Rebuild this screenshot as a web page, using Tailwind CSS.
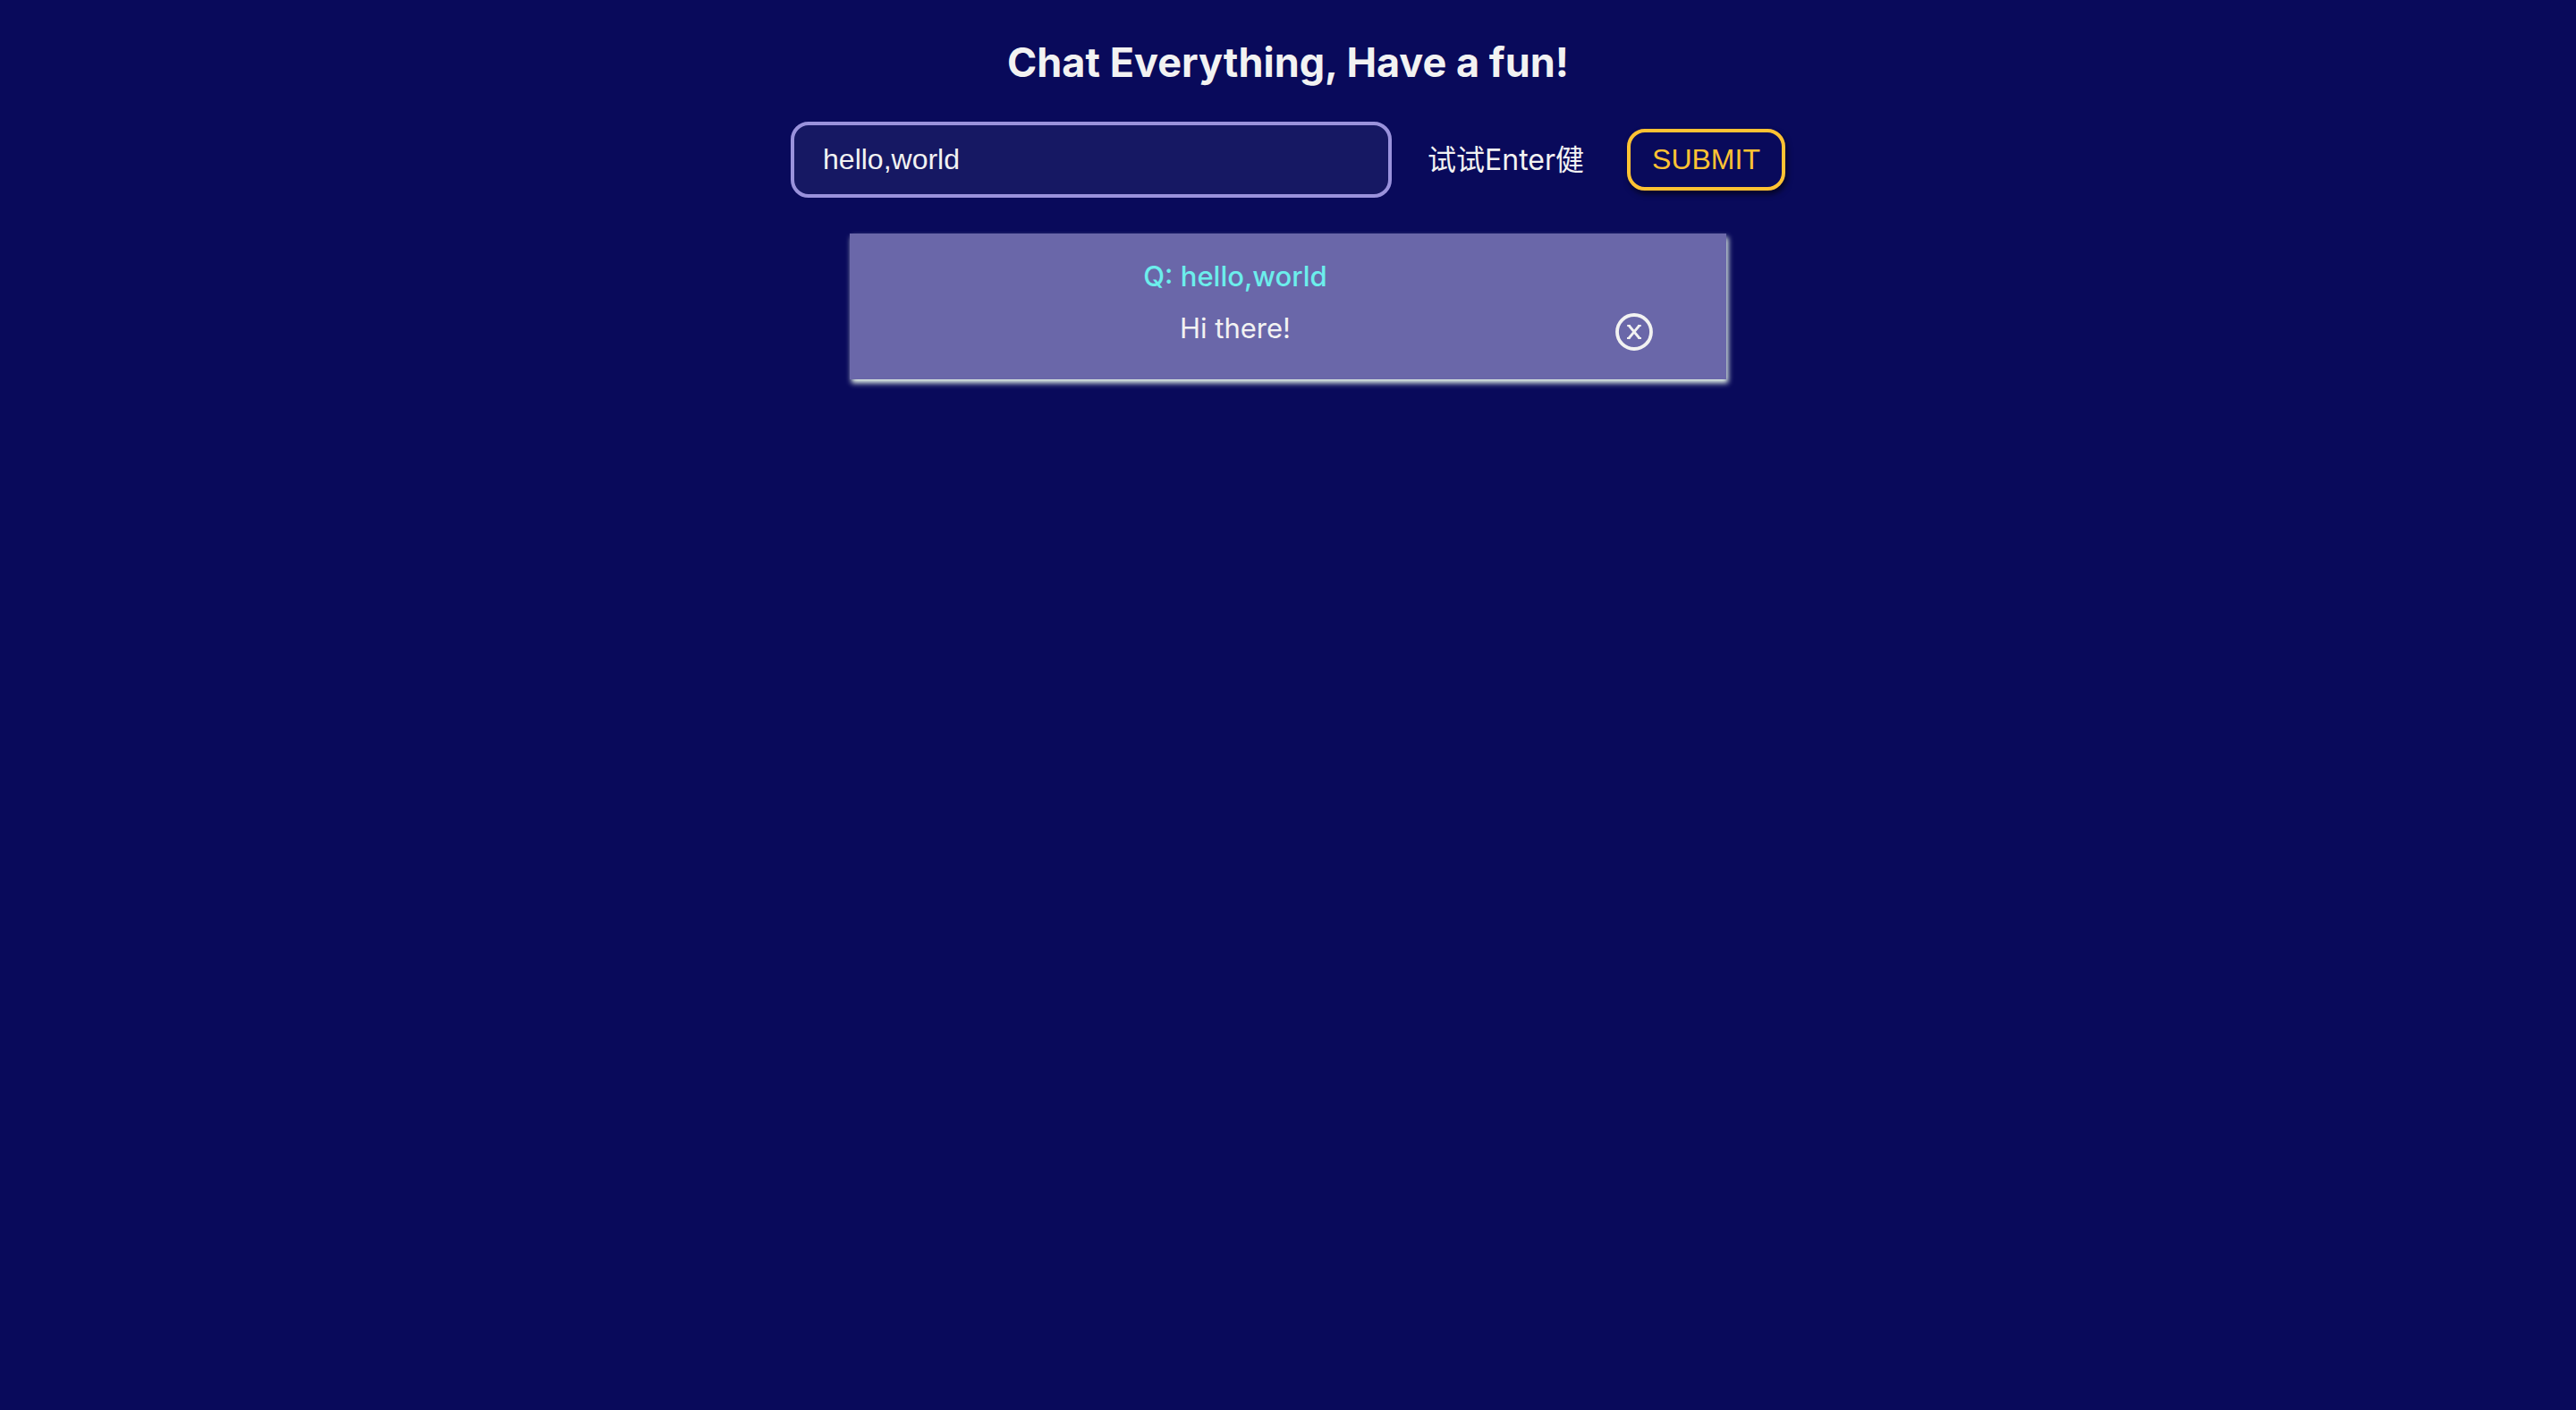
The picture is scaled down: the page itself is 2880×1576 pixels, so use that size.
<!DOCTYPE html>
<html lang="zh-CN">
<head>
<meta charset="UTF-8">
<meta name="viewport" content="width=device-width, initial-scale=1">
<title>Chat Everything</title>
<script src="https://cdn.jsdelivr.net/npm/@tailwindcss/browser@4"></script>
</head>
<body class="min-h-screen bg-[#090a5b] font-['Inter','Noto_Sans_CJK_SC',sans-serif] text-[32px] leading-[40px] text-[#f2f2f2]">
<main class="flex flex-col items-center pt-10">
  <h1 class="text-[45px] leading-[60px] font-bold">Chat Everything, Have a fun!</h1>
  <form class="mt-9 flex items-center" onsubmit="return false">
    <input id="question" type="text" value="hello,world" class="h-[85px] w-[672px] rounded-[20px] border-4 border-[#9a92dc] bg-[#161863] px-8 font-['Liberation_Sans',sans-serif] outline-none">
    <label for="question" class="ml-10 whitespace-nowrap">试试Enter健</label>
    <button type="submit" class="ml-12 h-[69px] rounded-[20px] border-4 border-[#ffc233] px-6 pb-0.5 font-['Liberation_Sans',sans-serif] text-[#ffc233] shadow-[2px_4px_6px_rgba(0,0,0,0.6)]">SUBMIT</button>
  </form>
  <article class="mt-10 flex w-[980px] max-w-full items-end bg-[#6a67a9] pt-7 pr-[82px] pb-8 pl-1.5 text-[31px] shadow-[2px_4px_6px_honeydew]">
    <div class="flex-1 pb-[5px] text-center">
      <h2 class="font-medium text-[#6ceeec]">Q: hello,world</h2>
      <p class="mt-[18px]">Hi there!</p>
    </div>
    <button type="button" aria-label="Delete" class="size-[42px] shrink-0">
      <svg viewBox="0 0 42 42" class="size-full" fill="none" stroke="#f2f2f2">
        <circle cx="21" cy="21" r="19" stroke-width="3.8"/>
        <path d="M13.2 13.9H16.6M25.4 13.9H28.8M13 28H16.4M25.6 28H29" stroke-width="2"/>
        <path d="M15 13.6L27.2 28.4M27 13.6L14.8 28.4" stroke-width="3"/>
      </svg>
    </button>
  </article>
</main>
</body>
</html>
